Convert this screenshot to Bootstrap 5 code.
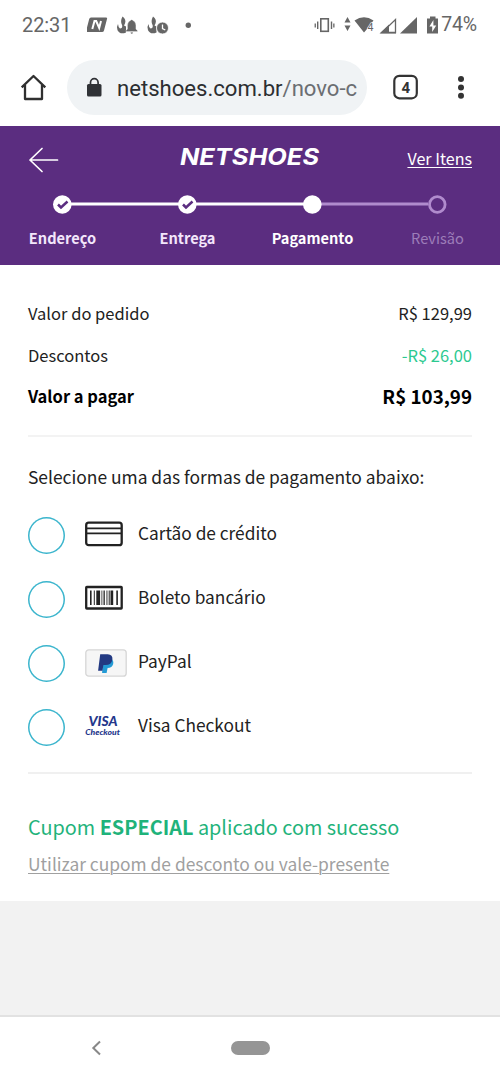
<!DOCTYPE html>
<html lang="pt-BR">
<head>
<meta charset="utf-8">
<meta name="viewport" content="width=device-width, initial-scale=1">
<title>Netshoes - Pagamento</title>
<link href="https://cdn.jsdelivr.net/npm/bootstrap@5.3.0/dist/css/bootstrap.min.css" rel="stylesheet">
<style>
body{font-family:"Noto Sans CJK SC","Noto Sans",sans-serif;color:#222;background:#fff;overflow:hidden}
svg{display:block;flex:none}
.screen{width:500px;height:1082px}
.statusbar{height:50px;font:20px/50px Roboto,sans-serif;color:#666;padding-left:22px}
.toolbar{height:76px;padding-left:20px;font-family:Roboto,sans-serif}
.omnibox{width:300px;height:55px;background:#f0f3f5;margin-left:20px;padding-left:19px;font-size:22.1px;line-height:56px;color:#2c2e31;white-space:nowrap;overflow:hidden}
.omnibox .path{color:#6b6e72}
.site-head{height:139px;background:#5b2d80;color:#fff}
.head-top{height:68px;padding:0 28px}
.items-link{font-size:16.1px;line-height:24px;color:#fff;text-underline-offset:2px;text-decoration-thickness:1px}
.steps{height:71px}
.step{width:125px;font-size:14.6px;font-weight:700;color:#f3e6fb}
.step.todo{font-weight:400;color:#9d7db9}
.step .label{line-height:24px;margin-top:12px}
.content{height:636px;padding:0 28px}
.summary{padding-top:28px;height:172px;border-bottom:2px solid #f3f3f3}
.line-item{height:41.5px;font-size:16.5px;line-height:41.5px}
.total{color:#000;font-weight:700}
.total .amount{font-size:18.8px;line-height:40px}
.discount{color:#2cc990}
.prompt{font-size:17.42px;line-height:26px;margin-top:27px}
.methods{padding-top:13px;height:282px}
.method{height:64px;font-size:17.3px}
.pick{width:37px;height:37px;border:0;box-shadow:inset 0 0 0 1.5px #3bb5cd;border-radius:50%;margin:0}
.method .pic{width:42px;margin:0 11px 0 20px}
.method .name{line-height:26px;margin-top:-4px}
.rule{border-top:2px solid #f0f0f0}
.coupon{color:#1fb37b;font-size:19.85px;line-height:30px;margin-top:38px}
.coupon-link{display:inline-block;color:#a0a0a0;font-size:17.4px;line-height:26px;margin-top:9px;text-underline-offset:2px;text-decoration-thickness:1px}
.blank{height:114px;background:#f2f2f2}
.navkeys{height:67px;border-top:2px solid #e2e2e2;padding:0 0 3px 91px}
.home-pill{width:39px;height:14px;background:#959595;margin-left:129px}
</style>
</head>
<body>
<div class="screen d-flex flex-column">
  <div class="statusbar d-flex align-items-center">
    <span style="letter-spacing:-.1px">22:31</span>
    <svg class="ms-3" width="108" height="24" viewBox="87 12 108 24" fill="#666">
      <path d="M91 16.500h15q1.500 0 1 1.500l-3 11.500q-.4 1.500-2 1.500H87q-1.200 0-.8-1.500l3-11.500q.4-1.500 1.800-1.500z"/>
      <path d="M92.300 28l2.200-8h1.700l3 7 1.800-7" fill="none" stroke="#fff" stroke-width="2"/>
      <path d="M122.500 15.500q4 3 2.500 7l-1 2 2 1v6q-6 2.500-8.500-2.200-1.500-3 .5-6.300.2 3 2 4.500 2.600 0 2.200-3-2.400-4 .3-9z"/>
      <path d="M130.500 19.500a1.300 1.300 0 0 1 2.400 0q3 1.300 3 5v3.500l1.600 1.700v.9h-11.600v-.9l1.600-1.700v-3.500q0-3.700 3-5zM130.500 31.300h2.600q-.2 1.600-1.300 1.600t-1.300-1.600z" stroke="#fff" stroke-width=".3"/>
      <path d="M153 15.500q4 3 2.500 7l-1 2 2 1v6q-6 2.500-8.500-2.200-1.500-3 .5-6.300.2 3 2 4.500 2.600 0 2.200-3-2.400-4 .3-9z"/>
      <circle cx="162.500" cy="27" r="6" stroke="#fff" stroke-width=".8"/><path d="M162.500 23.500v4l2.800 1.500" fill="none" stroke="#fff" stroke-width="1.300"/>
      <circle cx="188.300" cy="24.300" r="2.700"/>
    </svg>
    <svg width="126" height="24" viewBox="314 12 126 24" fill="#666" style="margin-left:119px">
      <rect x="320.800" y="17.800" width="7.500" height="12.500" fill="none" stroke="#666" stroke-width="1.600"/>
      <path d="M317 20.500h1.400v7.500H317zM314.600 22.500h1.300v4h-1.300zM330.800 20.500h1.400v7.500h-1.400zM333.200 22.500h1.300v4h-1.300z"/>
      <path d="M347.500 16l3 5.500h-6zM347.500 30l3-5.500h-6z"/>
      <path d="M354.500 19.500q9.500-6.500 19 0l-3.500 4.500-3 3.500v.5l-3 3.500z"/>
      <text x="367.500" y="30" font-family="Roboto,sans-serif" font-size="10.500" stroke="#fff" stroke-width="1.200" paint-order="stroke">4</text>
      <path d="M395.500 18.500v13h-13.500z" fill="none" stroke="#666" stroke-width="1.300"/><path d="M379.500 32.500l9.500-9v7.500h7v1.500z"/>
      <path d="M417 16v16.500h-17z"/>
      <path d="M430 15.500h5.500v2h2.500v15h-11v-15h3z"/>
      <path d="M433.400 19l-4 6.500h2.800V31l4-6.500h-2.800z" fill="#fff"/>
    </svg>
    <span style="font-size:19.500px;margin-left:1px;letter-spacing:-.2px">74%</span>
  </div>
  <div class="toolbar d-flex align-items-start">
    <svg width="27" height="27" viewBox="0 0 27 27" fill="none" stroke="#303030" stroke-width="2.300" style="margin-top:24px"><path d="M1.700 13.300L13.500 2l11.800 11.300M5 11v14h17V11" stroke-linejoin="round"/></svg>
    <div class="omnibox rounded-pill d-flex" style="margin-top:10px">
      <svg width="17" height="21" viewBox="0 0 17 21" style="margin-top:17px;margin-right:14px"><path d="M4.500 8V5.500a3.800 3.800 0 0 1 7.600 0V8" fill="none" stroke="#303236" stroke-width="1.700"/><rect x="1" y="7" width="14.500" height="12.500" rx="1.500" fill="#303236"/></svg>
      <span class="url">netshoes.com.br<span class="path">/novo-c</span></span>
    </div>
    <svg width="27" height="27" viewBox="0 0 27 27" style="margin:24px 0 0 26px"><rect x="1.300" y="1.800" width="22.500" height="22.500" rx="5" fill="none" stroke="#333" stroke-width="2.200"/><text x="12.700" y="18.500" font-family="Roboto,sans-serif" font-weight="700" font-size="15" text-anchor="middle" fill="#333">4</text></svg>
    <svg width="8" height="26" viewBox="0 0 8 26" fill="#333" style="margin:24px 0 0 37px"><circle cx="4" cy="5" r="3"/><circle cx="4" cy="13.400" r="3"/><circle cx="4" cy="21.800" r="3"/></svg>
  </div>
  <header class="site-head">
    <div class="head-top d-flex justify-content-between align-items-center">
      <svg width="31" height="26" viewBox="0 0 31 26" fill="none" stroke="#fff" stroke-width="1.700" stroke-linecap="round" stroke-linejoin="round"><path d="M14 1.500L2 13l12 11.500M2 13h27.500"/></svg>
      <svg width="142" height="26" viewBox="0 0 142 26" style="margin-left:34px;margin-top:-6px"><text x="1" y="21" font-family="Inter,sans-serif" font-style="italic" font-weight="700" font-size="23" textLength="139" lengthAdjust="spacingAndGlyphs" fill="#fff">NETSHOES</text></svg>
      <a href="#" class="items-link" style="margin-top:-5px">Ver Itens</a>
    </div>
    <div class="steps">
      <svg width="500" height="20" viewBox="0 0 500 20">
        <path d="M62 10h250" stroke="#fff" stroke-width="3"/><path d="M312 10h116" stroke="#b08bcd" stroke-width="3"/>
        <g fill="#fff"><circle cx="62.300" cy="10.500" r="9.300"/><circle cx="187.300" cy="10.500" r="9.300"/><circle cx="312.300" cy="10.500" r="9.300"/></g>
        <path d="M58 10.500l3 3 6.500-6M183 10.500l3 3 6.500-6" fill="none" stroke="#5b2d80" stroke-width="2.500"/>
        <circle cx="437.300" cy="10.500" r="7.800" fill="#5b2d80" stroke="#b08bcd" stroke-width="2.800"/>
      </svg>
      <div class="d-flex text-center">
        <div class="step"><div class="label">Endereço</div></div>
        <div class="step"><div class="label">Entrega</div></div>
        <div class="step text-white"><div class="label">Pagamento</div></div>
        <div class="step todo"><div class="label">Revisão</div></div>
      </div>
    </div>
  </header>
  <main class="content">
    <section class="summary">
      <div class="line-item d-flex justify-content-between"><span>Valor do pedido</span><span>R$ 129,99</span></div>
      <div class="line-item d-flex justify-content-between"><span>Descontos</span><span class="discount">-R$ 26,00</span></div>
      <div class="line-item total d-flex justify-content-between"><span>Valor a pagar</span><span class="amount">R$ 103,99</span></div>
    </section>
    <section class="methods-wrap">
      <div class="prompt">Selecione uma das formas de pagamento abaixo:</div>
      <div class="methods">
        <label class="method d-flex align-items-center"><input type="radio" name="pay" class="form-check-input pick"><span class="pic">
          <svg width="38" height="26" viewBox="0 0 38 26" fill="none" stroke="#222" style="margin-top:-3px"><rect x="1.200" y="1.700" width="35.500" height="22.500" rx="2.500" stroke-width="2.300"/><path d="M1 7.300h36M1 12.300h36" stroke-width="1.700"/></svg></span><span class="name">Cartão de crédito</span></label>
        <label class="method d-flex align-items-center"><input type="radio" name="pay" class="form-check-input pick"><span class="pic">
          <svg width="38" height="26" viewBox="0 0 38 26" style="margin-top:-3px"><rect x="1.200" y="2" width="35.500" height="21.500" rx=".6" fill="none" stroke="#222" stroke-width="2.300"/><path d="M5 5.500h1.600v14.500H5zM8.800 5.500h1v14.500h-1zM11.300 5.500h3.800v14.500h-3.800zM16.500 5.500h.8v14.500h-.8zM18.500 5.500h1.300v14.500h-1.300zM21.500 5.500h.9v14.500h-.9zM23.700 5.500h1v14.500h-1zM25.500 5.500h2.700v14.500h-2.700zM31.300 5.500h1.600v14.500h-1.600z" fill="#222"/></svg></span><span class="name">Boleto bancário</span></label>
        <label class="method d-flex align-items-center"><input type="radio" name="pay" class="form-check-input pick"><span class="pic">
          <svg width="42" height="28" viewBox="0 0 42 28"><rect x=".8" y=".8" width="40.400" height="26.400" rx="3" fill="#f6f6f6" stroke="#d6d6d6" stroke-width="1.300"/><path d="M18 10h8.500q2.500 2 1.600 5.300-1 3.600-5.500 3.700l-1 5h-4.500z" fill="#239bd5"/><path d="M15.200 5.200h7.500q5.300.4 4.700 5.300-.8 5.500-7 5.500h-2l-1 5.700h-4.300z" fill="#223982"/></svg></span><span class="name">PayPal</span></label>
        <label class="method d-flex align-items-center"><input type="radio" name="pay" class="form-check-input pick"><span class="pic">
          <svg width="42" height="26" viewBox="0 0 42 26" fill="#24378b" font-family="Lato,sans-serif" font-style="italic" font-weight="700" style="margin-top:-3px"><text x="3.500" y="13.300" font-size="13" font-weight="900" textLength="29" lengthAdjust="spacingAndGlyphs">VISA</text><text x=".3" y="22" font-size="7.300" font-weight="900" textLength="34.500" lengthAdjust="spacingAndGlyphs">Checkout</text></svg></span><span class="name">Visa Checkout</span></label>
      </div>
      <div class="rule"></div>
    </section>
    <div class="coupon">Cupom <b>ESPECIAL</b> aplicado com sucesso</div>
    <a href="#" class="coupon-link">Utilizar cupom de desconto ou vale-presente</a>
  </main>
  <div class="blank"></div>
  <nav class="navkeys d-flex align-items-center">
    <svg width="11" height="16" viewBox="0 0 11 16" fill="none" stroke="#888" stroke-width="2"><path d="M9 1.500L2.300 8 9 14.500"/></svg>
    <div class="home-pill rounded-pill"></div>
  </nav>
</div>
<script src="https://cdn.jsdelivr.net/npm/bootstrap@5.3.0/dist/js/bootstrap.bundle.min.js"></script>
</body>
</html>
